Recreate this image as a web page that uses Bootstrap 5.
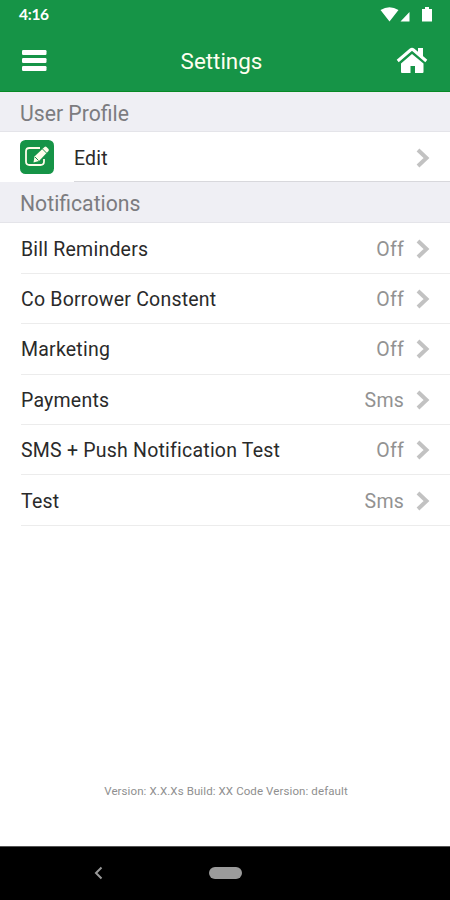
<!DOCTYPE html>
<html lang="en">
<head>
<meta charset="utf-8">
<meta name="viewport" content="width=device-width, initial-scale=1">
<title>Settings</title>
<link href="https://cdn.jsdelivr.net/npm/bootstrap@5.3.0/dist/css/bootstrap.min.css" rel="stylesheet">
<style>
body{font-family:Roboto,"Liberation Sans",sans-serif;font-size:19.5px;line-height:24px;letter-spacing:.22px;color:#2a2a2a}
.app{height:900px;overflow:hidden}
.top{height:92px;background:#169447;border-bottom:1px solid #078a25;color:#fff}
.status{height:30px;padding:0 17px 0 19px;font:700 15.5px/28px Lato,sans-serif;letter-spacing:-.3px}
.status span{margin-top:-2px}
.status svg{margin-top:-2px}
.bar{height:61px;padding:0 22px}
.bar h1{font-size:22.4px;line-height:26px;font-weight:400;letter-spacing:0;color:#fffff0;padding-top:1px}
.section{background:#efeff4;color:#7c7c80;height:40px;padding:4px 20px 0;font-size:21.2px;letter-spacing:0;font-weight:400;border-bottom:1px solid #e4e4e9}
.section.second{height:41.4px}
.item{height:50.4px;padding-right:20px;margin-left:21px;border-bottom:1px solid #ececec}
.item span{padding-top:3px}
.edit-cell span{padding-top:4px}
.profile{height:50px;padding-left:20px}
.edit-cell{height:50px;margin-left:20px;padding-right:20px;border-bottom:1px solid #d8d8dc}
.item svg{margin-top:1px}
.edit-cell svg{margin-top:2px}
.value{color:#929292;margin-right:12px}
.version{font-size:11.5px;line-height:16px;color:#8f8f8f;letter-spacing:.1px;padding-bottom:47px;padding-left:2px}
.system{height:54px;background:#000;border-top:1px solid #555}
.home-pill{width:33px;height:12px;background:#9b9b9b;margin-left:2px;margin-top:-1px}
.back-icon{margin-left:46px;margin-top:-1px}
svg{display:block;flex:none}
</style>
<script src="https://cdn.jsdelivr.net/npm/bootstrap@5.3.0/dist/js/bootstrap.bundle.min.js"></script>
</head>
<body>
<svg width="0" height="0" class="d-none"><symbol id="chev" viewBox="0 0 14 20"><path d="M2 2l8.500 8L2 18" fill="none" stroke="#c2c2c2" stroke-width="4"/></symbol></svg>
<div class="app d-flex flex-column">
<header class="top">
<div class="status d-flex justify-content-between align-items-center"><span>4:16</span>
<svg width="54" height="18" viewBox="0 0 54 18" fill="#fff"><path d="M1.500 5Q10.500-.5 19.500 5L10.500 16.500zM21.500 16.500l9-9.500v9.500zM43 4h3V2h4v2h3v12.500H43z"/></svg></div>
<div class="bar d-flex justify-content-between align-items-center">
<svg width="25" height="22" viewBox="0 0 25 22" fill="#fff"><rect y="0" width="24.500" height="5" rx="1.200"/><rect y="8" width="24.500" height="5" rx="1.200"/><rect y="16" width="24.500" height="5" rx="1.200"/></svg>
<h1 class="m-0">Settings</h1>
<svg width="32" height="28" viewBox="0 0 32 28" fill="#fff"><path d="M22 1h5v11l-5-4z"/><path d="M16 7L27.500 16.500V25q0 1-1 1H19v-7h-4.500v7H6q-1 0-1-1v-8.500z"/><path d="M1.700 14L14.500 3Q16 1.800 17.500 3L30.300 14" fill="none" stroke="#fff" stroke-width="3"/><path d="M4 15.200L16 5.200 28 15.200" fill="none" stroke="#169447" stroke-width=".8"/></svg>
</div>
</header>
<main class="flex-grow-1 d-flex flex-column">
<h2 class="section m-0 d-flex align-items-center">User Profile</h2>
<div class="profile d-flex align-items-center">
<svg width="34" height="34" viewBox="0 0 34 34"><rect width="34" height="34" rx="5.500" fill="#169447"/><path d="M20 8H9.500Q6 8 6 11.500v10Q6 25 9.500 25h11q3.500 0 3.500-3.500V19" fill="none" stroke="#fffdea" stroke-width="1.800"/><path d="M13.500 22.500l1-6L24.500 7q1-.8 2 0l2 2q.8 1 0 2l-9.500 10z" fill="#fffdea"/><path d="M22.500 9l4.500 4.500M15 17l3.500 3.500" stroke="#169447" stroke-width="1"/></svg>
<div class="edit-cell flex-grow-1 d-flex align-items-center justify-content-between"><span>Edit</span><svg width="14" height="20"><use href="#chev"/></svg></div>
</div>
<h2 class="section second m-0 d-flex align-items-center">Notifications</h2>
<div class="item d-flex align-items-center"><span class="me-auto">Bill Reminders</span><span class="value">Off</span><svg width="14" height="20"><use href="#chev"/></svg></div>
<div class="item d-flex align-items-center"><span class="me-auto">Co Borrower Constent</span><span class="value">Off</span><svg width="14" height="20"><use href="#chev"/></svg></div>
<div class="item d-flex align-items-center"><span class="me-auto">Marketing</span><span class="value">Off</span><svg width="14" height="20"><use href="#chev"/></svg></div>
<div class="item d-flex align-items-center"><span class="me-auto">Payments</span><span class="value">Sms</span><svg width="14" height="20"><use href="#chev"/></svg></div>
<div class="item d-flex align-items-center"><span class="me-auto">SMS + Push Notification Test</span><span class="value">Off</span><svg width="14" height="20"><use href="#chev"/></svg></div>
<div class="item d-flex align-items-center"><span class="me-auto">Test</span><span class="value">Sms</span><svg width="14" height="20"><use href="#chev"/></svg></div>
<footer class="version mt-auto text-center">Version: X.X.Xs Build: XX Code Version: default</footer>
</main>
<nav class="system d-grid align-items-center">
<div class="row g-0 align-items-center"><div class="col-5 ps-5"><svg class="back-icon" width="10" height="14" viewBox="0 0 10 14"><path d="M7.500 1.500L2 7l5.500 5.500" fill="none" stroke="#999" stroke-width="2"/></svg></div><div class="col-2 d-flex justify-content-center"><div class="home-pill rounded-pill"></div></div></div>
</nav>
</div>
</body>
</html>
